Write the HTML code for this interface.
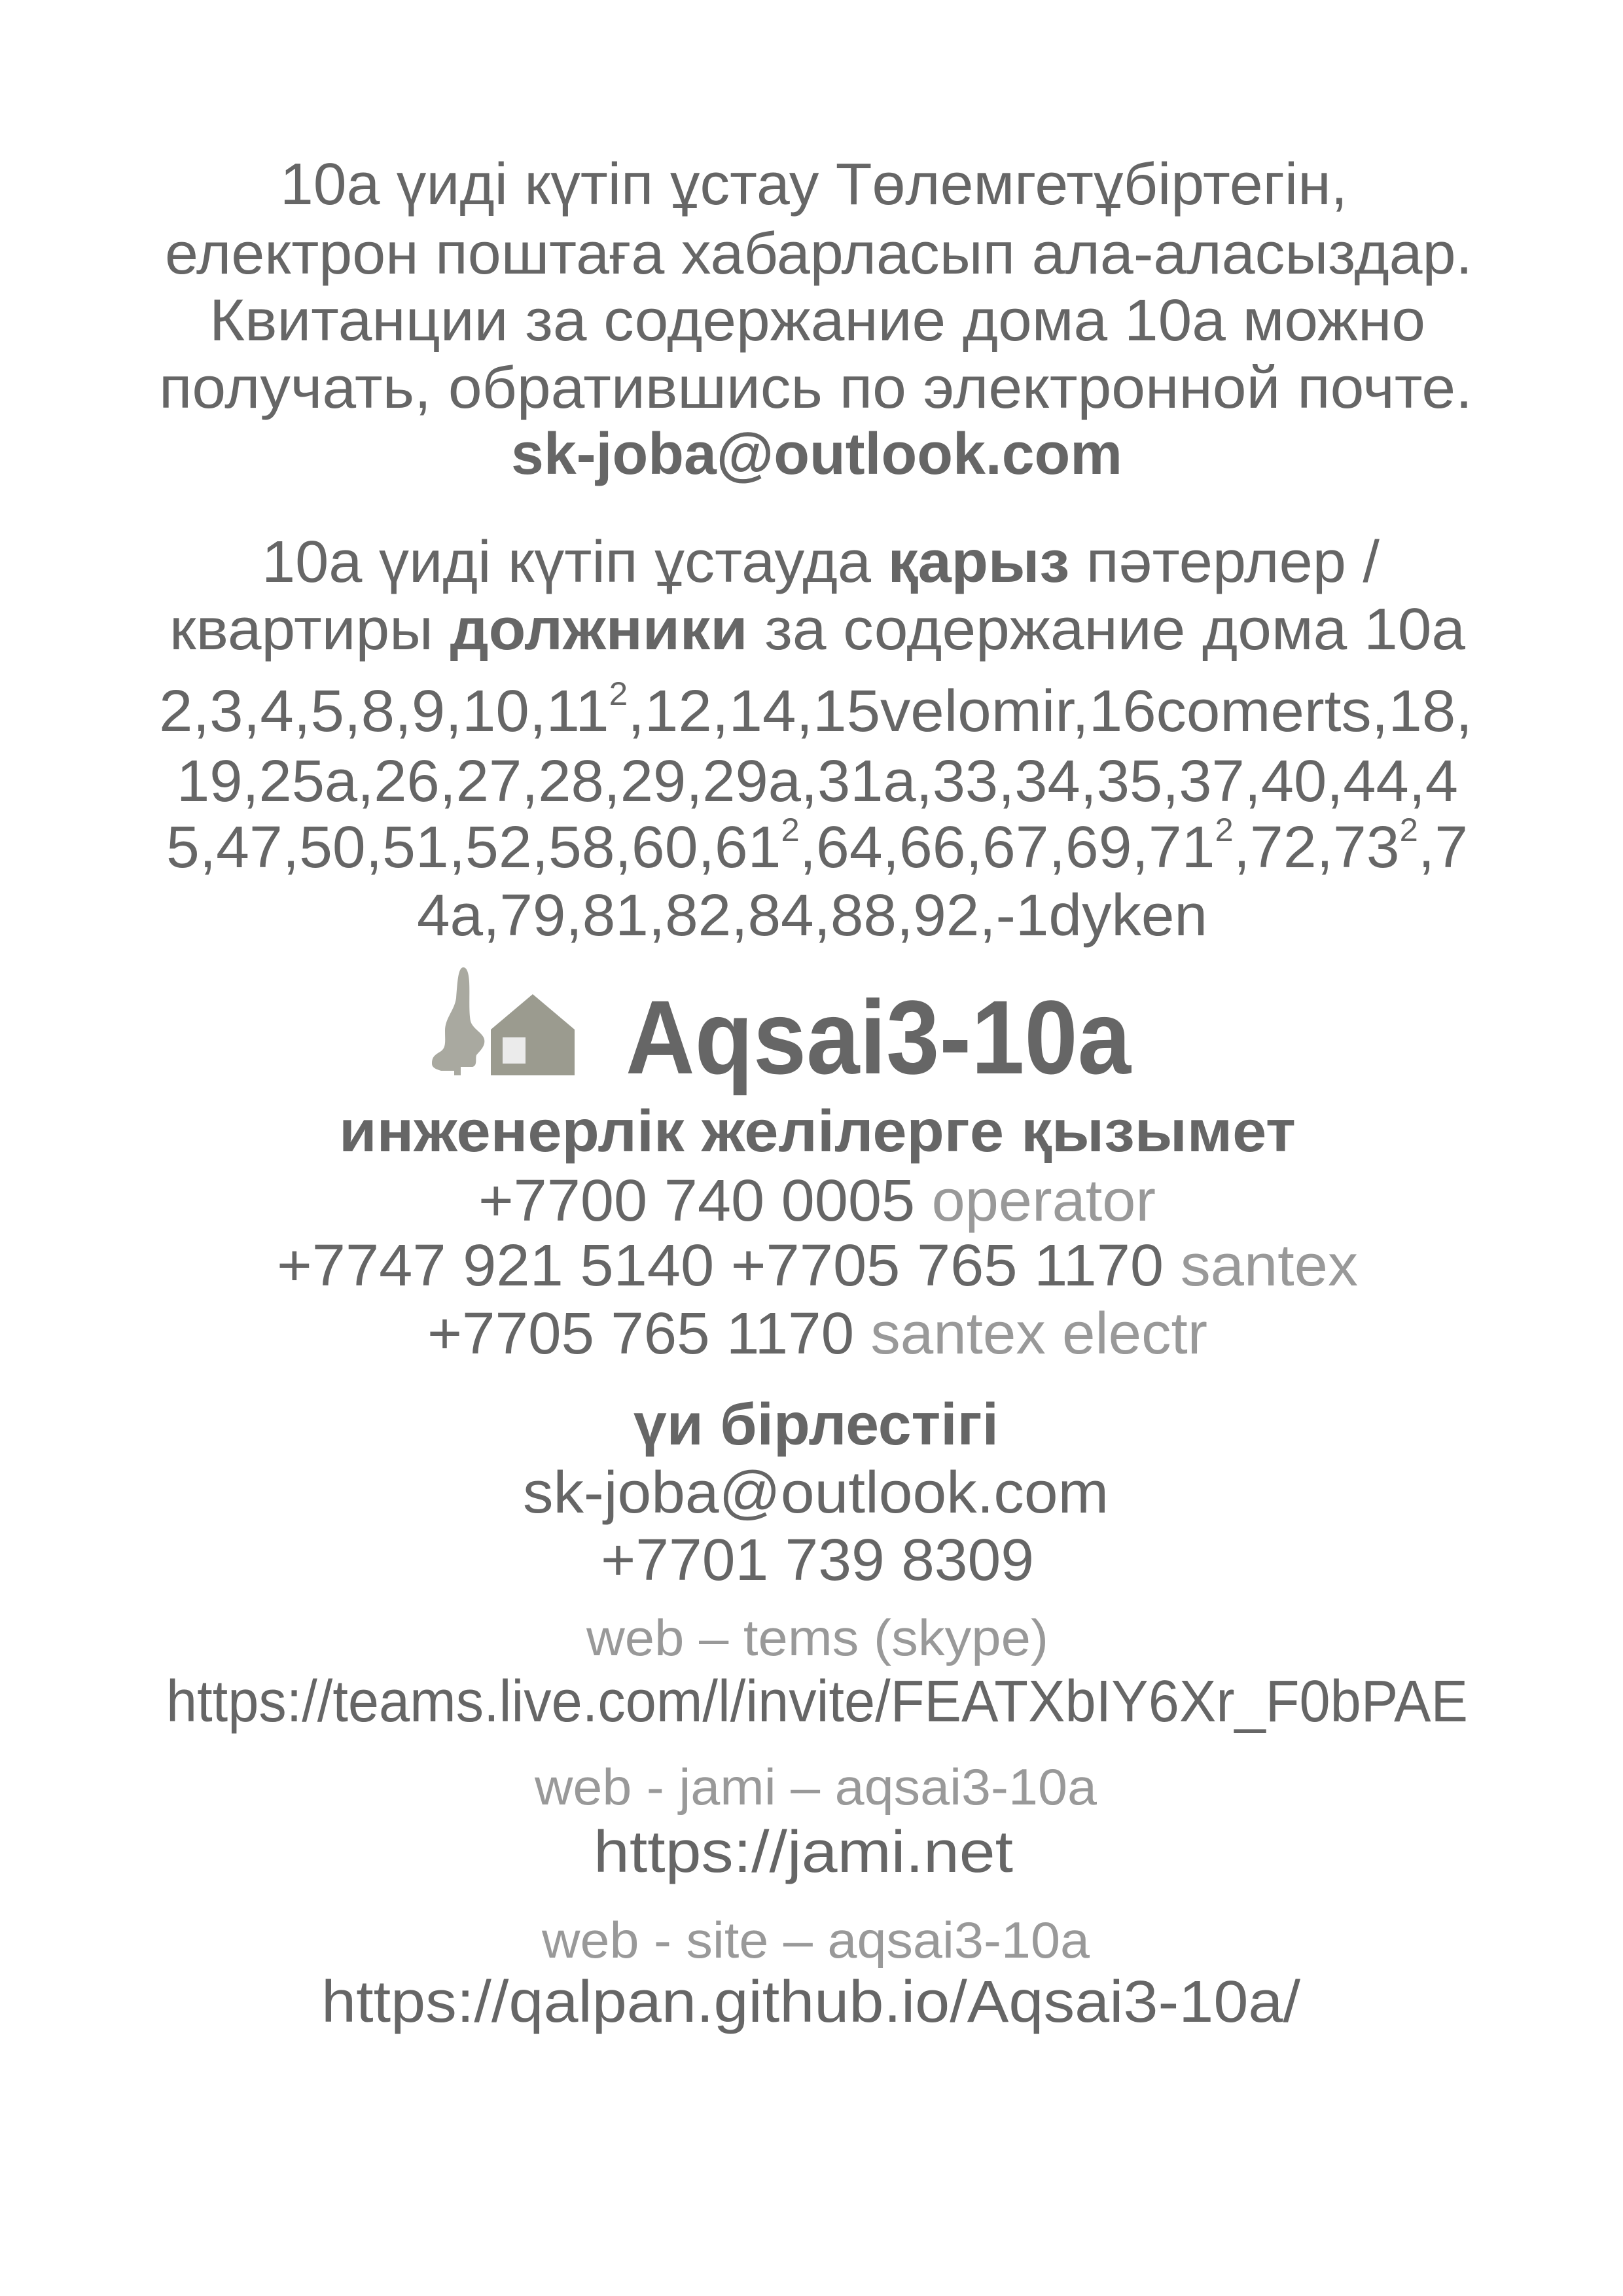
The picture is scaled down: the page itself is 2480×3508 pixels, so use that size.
<!DOCTYPE html>
<html><head><meta charset="utf-8"><style>
html,body{margin:0;padding:0;background:#fff;}
svg{display:block}
text{font-family:"Liberation Sans","DejaVu Sans",sans-serif;fill:#666;}
.g{fill:#999}
.b{font-weight:bold}
</style></head><body>
<svg width="2480" height="3508" viewBox="0 0 2480 3508" xmlns="http://www.w3.org/2000/svg">
<g font-size="90" transform="translate(0,-6)">
<text x="428" y="318" textLength="1631" lengthAdjust="spacingAndGlyphs">10а үиді күтіп ұстау Төлемгетұбіртегін,</text>
<text x="252" y="424" textLength="1998" lengthAdjust="spacingAndGlyphs">електрон поштаға хабарласып ала-аласыздар.</text>
<text x="320" y="526" textLength="1858" lengthAdjust="spacingAndGlyphs">Квитанции за содержание дома 10а можно</text>
<text x="243" y="629" textLength="2007" lengthAdjust="spacingAndGlyphs">получать, обратившись по электронной почте.</text>
<text class="b" x="781" y="730" textLength="934" lengthAdjust="spacingAndGlyphs">sk-joba@outlook.com</text>
<text x="400" y="895" textLength="1708" lengthAdjust="spacingAndGlyphs">10а үиді күтіп ұстауда <tspan class="b">қарыз</tspan> пәтерлер /</text>
<text x="259" y="998" textLength="1980" lengthAdjust="spacingAndGlyphs">квартиры <tspan class="b">должники</tspan> за содержание дома 10а</text>
<text x="243" y="1123" textLength="2007" lengthAdjust="spacingAndGlyphs">2,3,4,5,8,9,10,11<tspan font-size="50" dy="-40">2</tspan><tspan dy="40">,12,14,15velomir,16comerts,18,</tspan></text>
<text x="270" y="1230" textLength="1958" lengthAdjust="spacingAndGlyphs">19,25a,26,27,28,29,29a,31a,33,34,35,37,40,44,4</text>
<text x="254" y="1331" textLength="1989" lengthAdjust="spacingAndGlyphs">5,47,50,51,52,58,60,61<tspan font-size="50" dy="-40">2</tspan><tspan dy="40">,64,66,67,69,71</tspan><tspan font-size="50" dy="-40">2</tspan><tspan dy="40">,72,73</tspan><tspan font-size="50" dy="-40">2</tspan><tspan dy="40">,7</tspan></text>
<text x="637" y="1435" textLength="1208" lengthAdjust="spacingAndGlyphs">4a,79,81,82,84,88,92,-1dyken</text>

<text class="b" font-size="160" x="956" y="1646" textLength="772" lengthAdjust="spacingAndGlyphs">Aqsai3-10a</text>
<text class="b" x="518" y="1765" textLength="1462" lengthAdjust="spacingAndGlyphs">инженерлік желілерге қызымет</text>
<text x="731" y="1871" textLength="1035" lengthAdjust="spacingAndGlyphs">+7700 740 0005 <tspan class="g">operator</tspan></text>
<text x="423" y="1970" textLength="1652" lengthAdjust="spacingAndGlyphs">+7747 921 5140  +7705 765 1170 <tspan class="g">santex</tspan></text>
<text x="653" y="2074" textLength="1192" lengthAdjust="spacingAndGlyphs">+7705 765 1170 <tspan class="g">santex electr</tspan></text>

<text class="b" x="968" y="2213" textLength="558" lengthAdjust="spacingAndGlyphs">үи бірлестігі</text>
<text x="799" y="2317" textLength="895" lengthAdjust="spacingAndGlyphs">sk-joba@outlook.com</text>
<text x="918" y="2420" textLength="662" lengthAdjust="spacingAndGlyphs">+7701 739 8309</text>
<text class="g" font-size="78" x="896" y="2535" textLength="706" lengthAdjust="spacingAndGlyphs">web – tems (skype)</text>
<text x="254" y="2636" textLength="1989" lengthAdjust="spacingAndGlyphs">https://teams.live.com/l/invite/FEATXbIY6Xr_F0bPAE</text>
<text class="g" font-size="78" x="817" y="2763" textLength="859" lengthAdjust="spacingAndGlyphs">web - jami – aqsai3-10a</text>
<text x="907" y="2866" textLength="641" lengthAdjust="spacingAndGlyphs">https://jami.net</text>
<text class="g" font-size="78" x="828" y="2997" textLength="837" lengthAdjust="spacingAndGlyphs">web - site – aqsai3-10a</text>
<text x="491" y="3095" textLength="1496" lengthAdjust="spacingAndGlyphs">https://qalpan.github.io/Aqsai3-10a/</text>
</g>
<!-- logo -->
<path d="M708 1478 C700 1478 699 1500 697 1525 C694 1545 680 1555 680 1575 C680 1590 682 1600 674 1606 C664 1612 660 1615 660 1625 C660 1632 668 1634 674 1636 L694 1636 L694 1643 L704 1643 L704 1630 L722 1630 C730 1628 726 1618 728 1612 C734 1605 742 1598 740 1588 C738 1578 722 1572 719 1560 C716 1545 718 1520 717 1500 C716 1485 713 1478 708 1478 Z" fill="#a9a9a0"/>
<path d="M750 1643 L750 1573 L814 1519 L878 1573 L878 1643 Z" fill="#9b9b8f"/>
<rect x="768" y="1585" width="35" height="40" fill="#ebebeb"/>
</svg>
</body></html>
